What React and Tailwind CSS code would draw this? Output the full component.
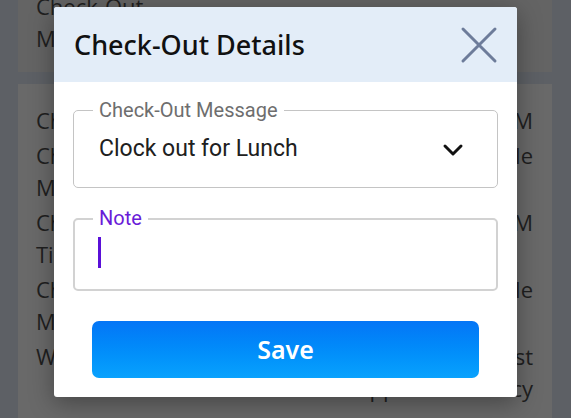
import React from "react";

const bgFont = { fontFamily: '"Open Sans", "Noto Sans", sans-serif' };

function Row({ left, right }) {
  return (
    <div className="flex justify-between text-[22px] leading-[32px] text-[#1f1f1f]">
      <div>
        {left.map((l, i) => (
          <div key={i} className="whitespace-nowrap">{l || "\u00a0"}</div>
        ))}
      </div>
      <div className="text-right">
        {right.map((l, i) => (
          <div key={i} className="whitespace-nowrap">{l || "\u00a0"}</div>
        ))}
      </div>
    </div>
  );
}

export default function App() {
  return (
    <div className="relative w-[571px] h-[418px] overflow-hidden bg-[#5d6065]" style={bgFont}>
      {/* background page */}
      <div className="pl-[18px] pr-[19px]">
        <div className="bg-[#646464] -mt-[10px] pl-[18px] pr-[19px] pb-[18px]">
          <Row left={["Check-Out", "Message"]} right={[""]} />
        </div>
        <div className="mt-[12px] bg-[#696969] pl-[18px] pr-[19px] pt-[20px] h-[400px] flex flex-col gap-[3px]">
          <Row left={["Check-In Time"]} right={["9:00 AM"]} />
          <Row left={["Check-In", "Message"]} right={["Available", ""]} />
          <Row left={["Check-Out", "Time"]} right={["5:00 PM", ""]} />
          <Row left={["Check-Out", "Message"]} right={["Available", ""]} />
          <Row left={["Work Location", ""]} right={["Test", "Approx. Accuracy"]} />
        </div>
      </div>

      {/* modal */}
      <div className="absolute left-[54px] top-[7px] w-[463px] h-[390px] bg-white rounded-[3px] overflow-hidden shadow-[0_6px_24px_rgba(0,0,0,0.35)] flex flex-col">
        <div className="h-[75px] bg-[#e3edf8] flex items-center justify-between pl-[20px] pr-[19px]">
          <div
            className="text-[27px] font-medium text-[#111] leading-none"
            style={{ fontFamily: '"Noto Sans", "Open Sans", sans-serif' }}
          >
            Check-Out Details
          </div>
          <svg width="38" height="38" viewBox="0 0 38 38">
            <path d="M3 3 L35 35 M35 3 L3 35" stroke="#6d7c9a" strokeWidth="3" strokeLinecap="round" />
          </svg>
        </div>

        <div className="px-[19px] pt-[28px] flex flex-col" style={{ fontFamily: 'Roboto, "Noto Sans", sans-serif' }}>
          {/* select */}
          <div className="relative h-[78px] border border-[#c4c4c4] rounded-[5px] flex items-center justify-between pl-[25px] pr-[33px]">
            <span className="absolute left-[19px] -top-[13px] bg-white px-[6px] text-[20px] leading-[24px] text-[#6e6e6e]">
              Check-Out Message
            </span>
            <span className="text-[23px] text-[#202020] leading-none mt-[-2px]">Clock out for Lunch</span>
            <svg width="22" height="14" viewBox="0 0 22 14" className="mt-[2px]">
              <path d="M3 3 L11 11 L19 3" stroke="#111" strokeWidth="3" fill="none" strokeLinecap="round" strokeLinejoin="round" />
            </svg>
          </div>

          {/* note */}
          <div className="relative mt-[30px] h-[73px] border-2 border-[#d2d2d2] rounded-[5px] pl-[23px] pt-[17px]">
            <span className="absolute left-[18px] -top-[14px] bg-white px-[6px] text-[20px] leading-[24px] text-[#6a1cd8]">
              Note
            </span>
            <div className="w-[3px] h-[31px] bg-[#5a10d8]" />
          </div>

          {/* save */}
          <div className="mx-[19px] mt-[30px] h-[57px] rounded-[7px] bg-gradient-to-b from-[#0575f6] to-[#0aa2fd] flex items-center justify-center">
            <span
              className="text-white text-[25px] font-semibold leading-none"
              style={{ fontFamily: '"Noto Sans", "Open Sans", sans-serif' }}
            >
              Save
            </span>
          </div>
        </div>
      </div>
    </div>
  );
}
